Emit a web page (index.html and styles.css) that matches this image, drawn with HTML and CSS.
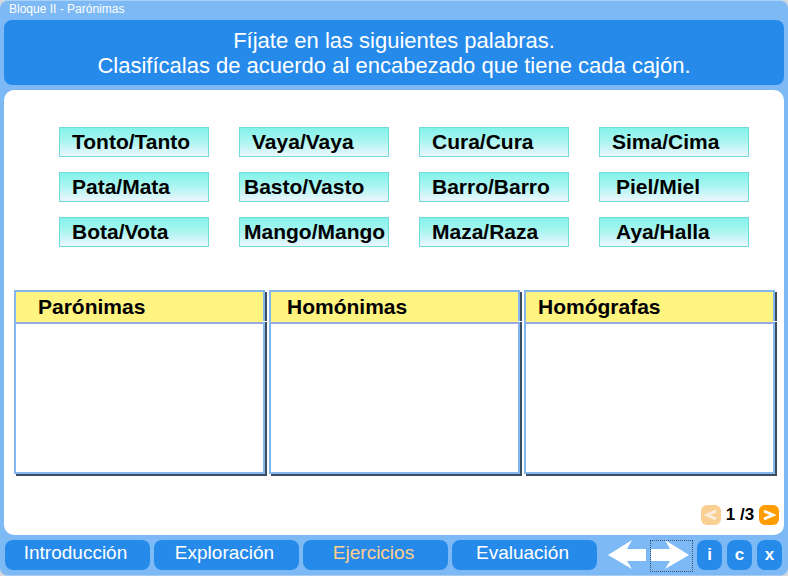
FILE: index.html
```html
<!DOCTYPE html>
<html lang="es">
<head>
<meta charset="utf-8">
<title>Bloque II - Parónimas</title>
<link rel="stylesheet" href="styles.css">
</head>
<body>
<div class="app">
  <div class="topbar">Bloque II - Parónimas</div>
  <header class="banner">
    <h1>Fíjate en las siguientes palabras.<br>Clasifícalas de acuerdo al encabezado que tiene cada cajón.</h1>
  </header>
  <main class="panel">
    <div class="words">
      <button class="word">Tonto/Tanto</button>
      <button class="word">Vaya/Vaya</button>
      <button class="word">Cura/Cura</button>
      <button class="word">Sima/Cima</button>
      <button class="word">Pata/Mata</button>
      <button class="word tight">Basto/Vasto</button>
      <button class="word">Barro/Barro</button>
      <button class="word wide">Piel/Miel</button>
      <button class="word">Bota/Vota</button>
      <button class="word tight">Mango/Mango</button>
      <button class="word">Maza/Raza</button>
      <button class="word wide">Aya/Halla</button>
    </div>
    <div class="drawers">
      <section class="drawer"><h2 class="indent">Parónimas</h2></section>
      <section class="drawer"><h2 class="indent-mid">Homónimas</h2></section>
      <section class="drawer"><h2>Homógrafas</h2></section>
    </div>
    <div class="pager">
      <button class="step" disabled aria-label="Ejercicio anterior"><svg viewBox="0 0 20 20"><path d="M15 6 6 10 15 14"/></svg></button>
      <span class="count">1 /3</span>
      <button class="step" aria-label="Ejercicio siguiente"><svg viewBox="0 0 20 20"><path d="M5 6 14 10 5 14"/></svg></button>
    </div>
  </main>
  <nav class="nav">
    <a class="tab" href="#introduccion">Introducción</a>
    <a class="tab" href="#exploracion">Exploración</a>
    <a class="tab current" href="#ejercicios">Ejercicios</a>
    <a class="tab" href="#evaluacion">Evaluación</a>
    <div class="arrows">
      <button class="arrow" aria-label="Atrás"><svg viewBox="0 0 42 32"><path d="M1 15 25 0 20 9H39V21H20L25 29Z"/></svg></button>
      <button class="arrow focused" aria-label="Adelante"><svg viewBox="0 0 42 32"><path d="M39 15 15 0 20 9H1V21H20L15 29Z"/></svg></button>
    </div>
    <div class="tools">
      <button class="tool">i</button>
      <button class="tool">c</button>
      <button class="tool">x</button>
    </div>
  </nav>
</div>
</body>
</html>
```
FILE: styles.css
```css
* {
  box-sizing: border-box;
}

body {
  margin: 0;
  background: #d5d9dc;
  font-family: "Liberation Sans", Arial, sans-serif;
}

button {
  margin: 0;
  padding: 0;
  border: 0;
  background: none;
  font: inherit;
  cursor: pointer;
}

.app {
  display: flex;
  flex-direction: column;
  min-height: 100vh;
  padding: 0 4px 5px;
  border-top: 1px solid #a9d0f8;
  border-bottom: 1px solid #a9cdf0;
  border-radius: 8px;
  background: #7db9f5;
}

.topbar {
  height: 19px;
  padding-left: 5px;
  color: #fff;
  font-size: 12px;
  line-height: 17px;
}

.banner {
  padding: 8px 0 7px;
  border-radius: 8px;
  background: #268aeb;
  color: #fff;
  text-align: center;
}

h1 {
  margin: 0;
  font-size: 22px;
  font-weight: normal;
  line-height: 25px;
}

.panel {
  display: flex;
  flex: 1;
  flex-direction: column;
  margin-top: 5px;
  padding: 37px 5px 10px 10px;
  border-radius: 10px;
  background: #fff;
}

.words {
  display: grid;
  grid-template-columns: repeat(4, minmax(0, 1fr));
  gap: 15px 30px;
  margin: 0 30px 0 45px;
}

.word {
  height: 30px;
  padding-left: 12px;
  border: 1px solid #6fdcd8;
  background: linear-gradient(#84f2ea, #a8f5f0 45%, #ecf6fd);
  color: #000;
  font-size: 21px;
  font-weight: bold;
  line-height: 28px;
  text-align: left;
  white-space: nowrap;
}

.word.tight {
  padding-left: 4px;
}

.word.wide {
  padding-left: 16px;
}

.drawers {
  display: grid;
  flex: 1;
  grid-template-columns: repeat(3, minmax(0, 1fr));
  gap: 4px;
  margin: 43px 4px 31px 0;
}

.drawer {
  border: 2px solid #82b6ec;
  background: #fff;
  box-shadow: 2px 2px 0 #3b4d5e;
}

h2 {
  position: relative;
  margin: 0;
  padding-left: 12px;
  border-bottom: 2px solid #9aa8e6;
  background: #fff480;
  font-size: 21px;
  line-height: 30px;
}

/* notch in the drawer's shadow, level with the heading rule */
h2::after {
  content: "";
  position: absolute;
  right: -4px;
  bottom: 0;
  width: 4px;
  height: 1px;
  background: #fff;
}

.indent {
  padding-left: 22px;
}

.indent-mid {
  padding-left: 16px;
}

.pager {
  display: flex;
  align-items: center;
  justify-content: flex-end;
}

.step {
  width: 20px;
  height: 20px;
  border-radius: 6px;
  background: #ff9c00;
}

.step:disabled {
  background: #f9cf94;
}

.step svg {
  display: block;
  width: 20px;
  height: 20px;
  fill: none;
  stroke: #fff;
  stroke-width: 3;
}

.step:disabled svg {
  stroke: #fdeedb;
}

.count {
  width: 38px;
  font-size: 17px;
  font-weight: bold;
  line-height: 20px;
  text-align: center;
}

.nav {
  display: flex;
  gap: 4px;
  margin-top: 5px;
  padding: 0 2px 0 1px;
}

.tab {
  flex: 1;
  height: 30px;
  padding-right: 4px;
  border-radius: 8px;
  background: #268aeb;
  color: #fff;
  font-size: 19px;
  line-height: 25px;
  text-align: center;
  text-decoration: none;
}

.tab.current {
  color: #ffcf8c;
}

.arrows {
  display: flex;
  margin-left: 6px;
}

.arrow {
  width: 43px;
  height: 32px;
  margin-bottom: -2px;
}

.arrow.focused {
  outline: 1px dotted #35536f;
  outline-offset: -1px;
}

.arrow svg {
  display: block;
  width: 42px;
  height: 32px;
  fill: #fff;
}

.tools {
  display: flex;
  gap: 5px;
}

.tool {
  width: 25px;
  height: 30px;
  border-radius: 8px;
  background: #268aeb;
  color: #fff;
  font-size: 17px;
  font-weight: bold;
  line-height: 28px;
}
```
